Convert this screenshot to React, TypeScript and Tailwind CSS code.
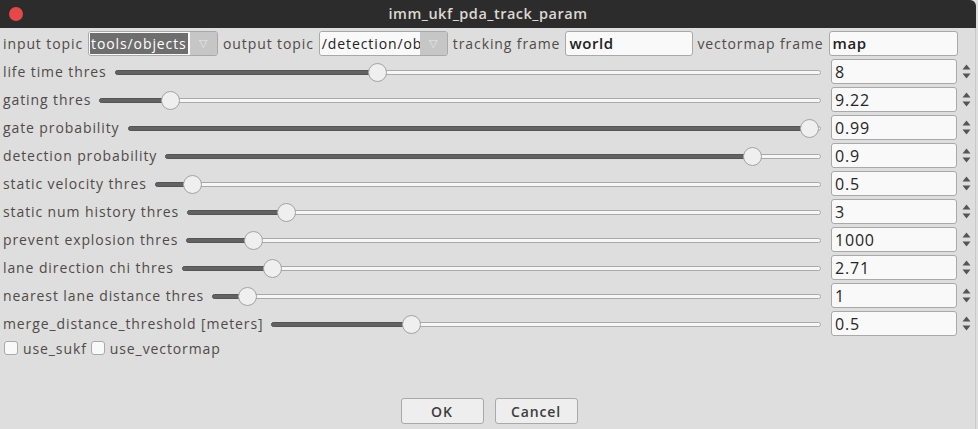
import React from "react";

const params = [
  { label: "life time thres", value: "8", pos: 0.368 },
  { label: "gating thres", value: "9.22", pos: 0.088 },
  { label: "gate probability", value: "0.99", pos: 0.996 },
  { label: "detection probability", value: "0.9", pos: 0.906 },
  { label: "static velocity thres", value: "0.5", pos: 0.043 },
  { label: "static num history thres", value: "3", pos: 0.146 },
  { label: "prevent explosion thres", value: "1000", pos: 0.094 },
  { label: "lane direction chi thres", value: "2.71", pos: 0.131 },
  { label: "nearest lane distance thres", value: "1", pos: 0.044 },
  { label: "merge_distance_threshold [meters]", value: "0.5", pos: 0.246 },
];

function Slider({ pos }: { pos: number }) {
  return (
    <div className="relative flex-1 h-[20px] mr-[2px]">
      <div className="absolute left-0 right-0 top-[8px] h-[5px] rounded-full bg-[#f6f6f6] border border-[#a9a9a9]" />
      <div
        className="absolute left-0 top-[8px] h-[5px] rounded-l-full bg-[#626262] border border-[#555]"
        style={{ width: `calc(${pos} * (100% - 18px) + 9px)` }}
      />
      <div
        className="absolute top-[1px] w-[19px] h-[19px] rounded-full bg-[#efefef] border border-[#a3a3a3]"
        style={{ left: `calc(${pos} * (100% - 18px))` }}
      />
    </div>
  );
}

function Spin({ value }: { value: string }) {
  return (
    <div className="flex items-center">
      <div className="w-[126px] h-[25px] rounded-[3px] border border-[#a9a9a9] bg-[#f9f9f9] px-[3px] flex items-center text-[#262626] font-medium text-[16px] tracking-[0.8px]">
        {value}
      </div>
      <div className="w-[18px] flex flex-col items-center justify-center gap-[3px] pl-[1px]">
        <svg width="9" height="6" viewBox="0 0 9 6"><path d="M0.5 5.5 L4.5 0.5 L8.5 5.5 Z" fill="#555" /></svg>
        <svg width="9" height="6" viewBox="0 0 9 6"><path d="M0.5 0.5 L4.5 5.5 L8.5 0.5 Z" fill="#555" /></svg>
      </div>
    </div>
  );
}

function Combo({ text, selected, w }: { text: string; selected?: boolean; w: string }) {
  return (
    <div className={`flex h-[25px] rounded-[3px] border border-[#a9a9a9] overflow-hidden shrink-0 ${w}`}>
      <div className="flex-1 min-w-0 bg-[#f9f9f9] flex items-center px-[1px] overflow-hidden whitespace-nowrap">
        <span className={selected ? "bg-[#6e6e6e] text-white px-[1px]" : "text-[#222] px-[1px]"}>{text}</span>
      </div>
      <div className="w-[27px] shrink-0 bg-[#c6c6c6] flex items-center justify-center text-[#e8e8e8] text-[11px]">▽</div>
    </div>
  );
}

function TextBox({ text, w }: { text: string; w: string }) {
  return (
    <div className={`h-[25px] shrink-0 rounded-[3px] border border-[#a9a9a9] bg-[#f9f9f9] flex items-center px-[3px] text-[#222] font-semibold text-[15px] tracking-[0.6px] ${w}`}>
      {text}
    </div>
  );
}

function CheckBox({ label }: { label: string }) {
  return (
    <div className="flex items-center gap-[5px]">
      <div className="w-[14px] h-[14px] rounded-[3px] border border-[#a9a9a9] bg-[#f9f9f9]" />
      <span>{label}</span>
    </div>
  );
}

export default function App() {
  return (
    <div
      className="w-[978px] h-[429px] bg-[#dedede] flex flex-col text-[14px] font-medium tracking-[0.9px] text-[#4f4b48] overflow-hidden"
      style={{ fontFamily: '"Open Sans", "Noto Sans", sans-serif' }}
    >
      <div className="h-[28px] w-[976px] bg-[#2c2c2c] rounded-tr-[6px] relative flex items-center justify-center shrink-0">
        <div className="absolute left-[9px] top-[7px] w-[14px] h-[14px] rounded-full bg-[#e8474a]" />
        <span className="text-[#dcd9d2] font-semibold text-[14.5px] tracking-[0.5px]">imm_ukf_pda_track_param</span>
      </div>
      <div className="flex-1 w-[976px] border-r border-[#c9c9c9] flex flex-col pl-[3px] pt-[3px] gap-[3px]">
        <div className="flex items-center h-[25px] gap-[5px] whitespace-nowrap">
          <span>input topic</span>
          <Combo text="tools/objects" selected w="w-[130px]" />
          <span>output topic</span>
          <Combo text="/detection/objects" w="w-[129px]" />
          <span>tracking frame</span>
          <TextBox text="world" w="w-[128px]" />
          <span className="-ml-[1px]">vectormap frame</span>
          <TextBox text="map" w="w-[129px]" />
        </div>
        {params.map((p) => (
          <div key={p.label} className="flex items-center h-[25px] gap-[8px]">
            <span className="whitespace-nowrap">{p.label}</span>
            <Slider pos={p.pos} />
            <Spin value={p.value} />
          </div>
        ))}
        <div className="flex items-center h-[18px] gap-[4px] pl-[1px]">
          <CheckBox label="use_sukf" />
          <CheckBox label="use_vectormap" />
        </div>
        <div className="flex justify-center gap-[11px] mt-[38px]">
          <button className="w-[83px] h-[26px] rounded-[3px] border border-[#a9a9a9] bg-[#eeeeee] text-[#3d3d3d] font-semibold">OK</button>
          <button className="w-[83px] h-[26px] rounded-[3px] border border-[#a9a9a9] bg-[#eeeeee] text-[#3d3d3d] font-semibold">Cancel</button>
        </div>
      </div>
    </div>
  );
}
